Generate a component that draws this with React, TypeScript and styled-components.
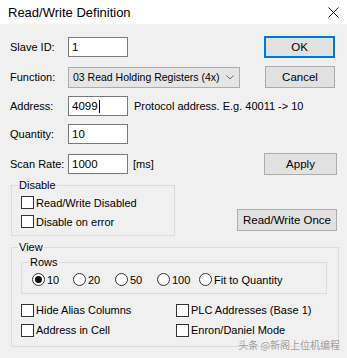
import React from "react";
import styled, { createGlobalStyle } from "styled-components";

const GlobalStyle = createGlobalStyle`
  html, body {
    margin: 0;
    padding: 0;
    background: #f0f0f0;
  }
`;

const UI_FONT = `"Liberation Sans", Arial, sans-serif`;

const Dialog = styled.div`
  position: relative;
  width: 347px;
  height: 358px;
  overflow: hidden;
  background: #f0f0f0;
  font-family: ${UI_FONT};
  font-size: 11px;
  color: #000;
`;

const TitleBar = styled.div`
  height: 24px;
  display: flex;
  align-items: center;
  justify-content: space-between;
  padding: 0 8px;
  background: #fff;
  font-size: 13px;
`;

const Body = styled.div`
  display: flex;
  flex-direction: column;
  padding: 12px 10px 0 10px;
`;

const Row = styled.div<{ $h: number; $mt?: number }>`
  display: flex;
  align-items: center;
  height: ${(p) => p.$h}px;
  margin-top: ${(p) => p.$mt ?? 0}px;
`;

const Label = styled.span`
  width: 58px;
  flex: none;
  white-space: nowrap;
`;

const TextBox = styled.div`
  box-sizing: border-box;
  width: 60px;
  height: 20px;
  flex: none;
  display: flex;
  align-items: center;
  padding: 0 3px;
  background: #fff;
  border: 1px solid #7a7a7a;
  font-size: 11.5px;
`;

const Caret = styled.span`
  display: inline-block;
  width: 1px;
  height: 13px;
  margin-left: 1px;
  background: #000;
`;

const Note = styled.span`
  margin-left: 6px;
  white-space: nowrap;
`;

const Select = styled.div`
  box-sizing: border-box;
  width: 172px;
  height: 21px;
  flex: none;
  display: flex;
  align-items: center;
  gap: 3px;
  padding: 0 5px 0 4px;
  background: #e5e5e5;
  border: 1px solid #acacac;
  font-size: 10.5px;
`;

const SelectText = styled.span`
  flex: 1;
  min-width: 0;
  white-space: nowrap;
`;

const Button = styled.div<{ $w: number; $default?: boolean }>`
  box-sizing: border-box;
  width: ${(p) => p.$w}px;
  height: 22px;
  flex: none;
  margin-left: auto;
  display: flex;
  align-items: center;
  justify-content: center;
  background: #e1e1e1;
  border: ${(p) => (p.$default ? "2px solid #0078d7" : "1px solid #adadad")};
  white-space: nowrap;
  font-size: 11.5px;
`;

const Group = styled.fieldset<{ $w: number }>`
  box-sizing: border-box;
  width: ${(p) => p.$w}px;
  margin: 0;
  padding: 0 9px 4px 9px;
  border: 1px solid #dcdcdc;
  min-width: 0;
`;

const Legend = styled.legend`
  margin-left: -3px;
  padding: 0 1px;
  line-height: 15px;
`;

const GroupRow = styled.div`
  display: flex;
  align-items: flex-end;
  margin-top: 4px;
  margin-left: 1px;
`;

const OnceButton = styled(Button)`
  margin-bottom: 5px;
`;

const CheckItem = styled.label<{ $h?: number }>`
  display: flex;
  align-items: center;
  height: ${(p) => p.$h ?? 19}px;
  white-space: nowrap;
`;

const Box = styled.span`
  box-sizing: border-box;
  width: 13px;
  height: 13px;
  margin-right: 2px;
  background: #fff;
  border: 1px solid #333;
`;

const Radio = styled.span<{ $on?: boolean }>`
  box-sizing: border-box;
  width: 13px;
  height: 13px;
  margin-right: 2px;
  display: flex;
  align-items: center;
  justify-content: center;
  border-radius: 50%;
  background: #fff;
  border: 1px solid #333;
  &::after {
    content: "";
    width: 7px;
    height: 7px;
    border-radius: 50%;
    background: ${(p) => (p.$on ? "#111" : "transparent")};
  }
`;

const ViewGroup = styled(Group)`
  margin-top: 4px;
  margin-left: 1px;
  padding: 0 9px 6px 9px;
`;

const RowsGroup = styled(Group)`
  padding: 0 10px 4px 10px;
`;

const RadioRow = styled.div`
  display: flex;
  height: 19px;
`;

const RadioItem = styled.label<{ $w?: number }>`
  display: flex;
  align-items: center;
  width: ${(p) => (p.$w ? `${p.$w}px` : "auto")};
  white-space: nowrap;
`;

const CheckGrid = styled.div`
  display: grid;
  grid-template-columns: 155px 1fr;
  margin-top: 6px;
`;

const Watermark = styled.div`
  position: absolute;
  right: 7px;
  bottom: 6px;
  font-family: "Noto Sans CJK SC", sans-serif;
  font-size: 10px;
  color: #9a9a9a;
  text-shadow: 0 0 1px #fff;
  white-space: nowrap;
`;

const CloseIcon = () => (
  <svg width="11" height="11" viewBox="0 0 11 11">
    <path d="M0.5 0.5 L10.5 10.5 M10.5 0.5 L0.5 10.5" stroke="#111" strokeWidth="1" fill="none" />
  </svg>
);

const Chevron = () => (
  <svg width="8" height="5" viewBox="0 0 8 5">
    <path d="M0.5 0.5 L4 4 L7.5 0.5" stroke="#666" strokeWidth="1" fill="none" />
  </svg>
);

const rowOptions = [
  { label: "10", on: true, w: 41 },
  { label: "20", w: 42 },
  { label: "50", w: 42 },
  { label: "100", w: 42 },
  { label: "Fit to Quantity" },
];

export default function App() {
  return (
    <Dialog>
      <GlobalStyle />
      <TitleBar>
        <span>Read/Write Definition</span>
        <CloseIcon />
      </TitleBar>
      <Body>
        <Row $h={22}>
          <Label>Slave ID:</Label>
          <TextBox>1</TextBox>
          <Button $w={71} $default style={{ marginRight: 2 }}>
            OK
          </Button>
        </Row>
        <Row $h={22} $mt={8}>
          <Label>Function:</Label>
          <Select>
            <SelectText>03 Read Holding Registers (4x)</SelectText>
            <Chevron />
          </Select>
          <Button $w={70} style={{ marginRight: 2 }}>
            Cancel
          </Button>
        </Row>
        <Row $h={20} $mt={8}>
          <Label>Address:</Label>
          <TextBox>
            4099
            <Caret />
          </TextBox>
          <Note>Protocol address. E.g. 40011 -&gt; 10</Note>
        </Row>
        <Row $h={20} $mt={8}>
          <Label>Quantity:</Label>
          <TextBox>10</TextBox>
        </Row>
        <Row $h={21} $mt={9}>
          <Label>Scan Rate:</Label>
          <TextBox>1000</TextBox>
          <Note style={{ marginLeft: 5 }}>[ms]</Note>
          <Button $w={73}>Apply</Button>
        </Row>
        <GroupRow>
          <Group $w={164}>
            <Legend>Disable</Legend>
            <CheckItem>
              <Box />
              Read/Write Disabled
            </CheckItem>
            <CheckItem>
              <Box />
              Disable on error
            </CheckItem>
          </Group>
          <OnceButton $w={100}>Read/Write Once</OnceButton>
        </GroupRow>
        <ViewGroup $w={328}>
          <Legend>View</Legend>
          <RowsGroup $w={306}>
            <Legend>Rows</Legend>
            <RadioRow>
              {rowOptions.map((o) => (
                <RadioItem key={o.label} $w={o.w}>
                  <Radio $on={o.on} />
                  {o.label}
                </RadioItem>
              ))}
            </RadioRow>
          </RowsGroup>
          <CheckGrid>
            <CheckItem $h={20}>
              <Box />
              Hide Alias Columns
            </CheckItem>
            <CheckItem $h={20}>
              <Box />
              PLC Addresses (Base 1)
            </CheckItem>
            <CheckItem $h={20}>
              <Box />
              Address in Cell
            </CheckItem>
            <CheckItem $h={20}>
              <Box />
              Enron/Daniel Mode
            </CheckItem>
          </CheckGrid>
        </ViewGroup>
      </Body>
      <Watermark>头条 @新阁上位机编程</Watermark>
    </Dialog>
  );
}
